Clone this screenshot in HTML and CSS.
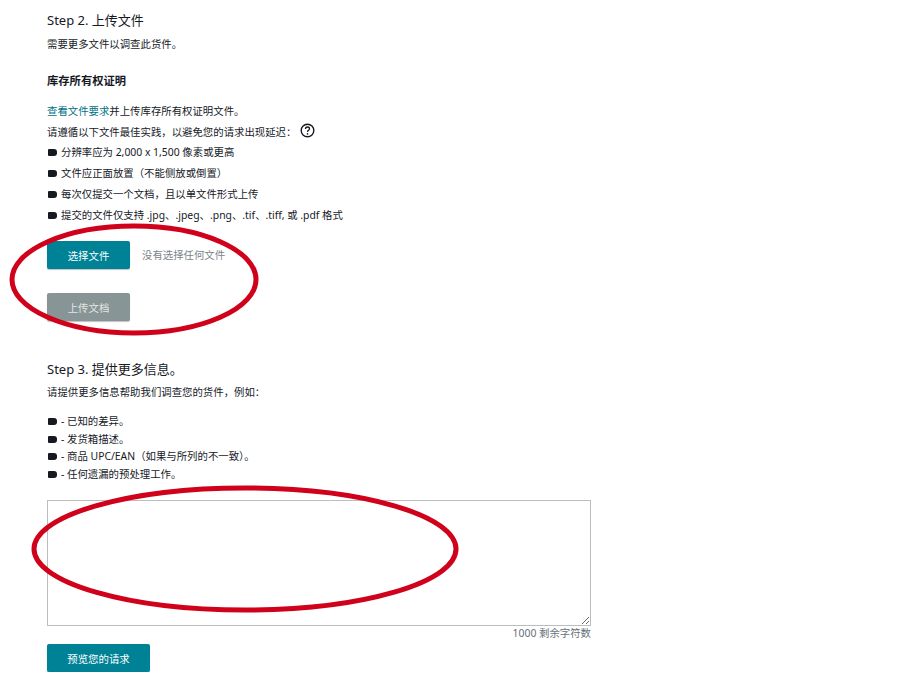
FILE: index.html
```html
<!DOCTYPE html>
<html lang="zh-CN">
<head>
  <meta charset="UTF-8" />
  <title>Step 2</title>
  <link rel="stylesheet" href="styles.css">
</head>
<body>

<div class="page">
  <!-- Step 2 -->
  <h3 class="step-title step-two">Step 2. 上传文件</h3>
  <p class="step-note">需要更多文件以调查此货件。</p>

  <h4 class="doc-title">库存所有权证明</h4>
  <p class="line"><a href="#" class="link">查看文件要求</a>并上传库存所有权证明文件。</p>
  <p class="line">请遵循以下文件最佳实践，以避免您的请求出现延迟：
    <svg class="help" width="15" height="15" viewBox="0 0 15 15">
      <circle cx="7.5" cy="7.5" r="6.3" fill="none" stroke="#16191f" stroke-width="1.4"/>
      <path d="M5.5 6c0-1.3 .9-2 2-2s2 .7 2 1.8c0 1.5-2 1.5-2 3.1" fill="none" stroke="#16191f" stroke-width="1.3"/>
      <circle cx="7.5" cy="10.9" r=".8" fill="#16191f"/>
    </svg>
  </p>
  <ul class="tips">
    <li>分辨率应为 2,000 x 1,500 像素或更高</li>
    <li>文件应正面放置（不能侧放或倒置）</li>
    <li>每次仅提交一个文档，且以单文件形式上传</li>
    <li>提交的文件仅支持 .jpg、.jpeg、.png、.tif、.tiff, 或 .pdf 格式</li>
  </ul>

  <div class="file-row">
    <button class="btn">选择文件</button>
    <span class="file-name">没有选择任何文件</span>
  </div>
  <button class="btn btn-disabled">上传文档</button>

  <!-- Step 3 -->
  <h3 class="step-title step-three">Step 3. 提供更多信息。</h3>
  <p class="step-note">请提供更多信息帮助我们调查您的货件，例如：</p>
  <ul class="tips tips-tight">
    <li>- 已知的差异。</li>
    <li>- 发货箱描述。</li>
    <li>- 商品 UPC/EAN（如果与所列的不一致）。</li>
    <li>- 任何遗漏的预处理工作。</li>
  </ul>

  <textarea class="notes"></textarea>
  <div class="counter">1000 剩余字符数</div>
  <button class="btn btn-wide">预览您的请求</button>
</div>

<!-- red hand-drawn marks on top of the page -->
<svg class="marks" width="914" height="686" viewBox="0 0 914 686">
  <ellipse cx="134" cy="279.5" rx="122" ry="53.5" fill="none" stroke="#d0021b" stroke-width="5"/>
  <ellipse cx="245" cy="549" rx="211" ry="61" fill="none" stroke="#d0021b" stroke-width="5"/>
</svg>

</body>
</html>
```

FILE: styles.css
```css
body {
  margin: 0;
  background: #fff;
  color: #16191f;
  font-family: "Noto Sans", "Noto Sans CJK SC", sans-serif;
  font-size: 10.4px;
  line-height: 16px;
}

.page {
  position: relative;
  width: 544px;
  padding-left: 47px;
}

.step-title {
  margin: 0;
  font-size: 13px;
  font-weight: 400;
  line-height: 18px;
}

.step-two {
  padding-top: 11px;
  margin-bottom: 7px;
}

.step-three {
  margin-top: 39px;
  margin-bottom: 6px;
}

.step-note {
  margin: 0;
}

.doc-title {
  margin: 21px 0 0;
  font-size: 11.3px;
  font-weight: 700;
}

.line {
  margin: 0;
  height: 21px;
  display: flex;
  align-items: center;
}

.doc-title + .line {
  margin-top: 11px;
}

.help {
  margin-left: 4px;
  margin-top: -3px;
}

.link {
  color: #007185;
  text-decoration: none;
}

.tips {
  margin: 0;
  padding: 0;
  list-style: none;
}

.tips li {
  position: relative;
  height: 21px;
  line-height: 21px;
  padding-left: 14px;
}

.tips li::before {
  content: "";
  position: absolute;
  left: 1px;
  top: 7px;
  width: 9px;
  height: 7px;
  background: #16191f;
  border-radius: 1px 3px 3px 1px;
}

.tips-tight {
  margin-top: 13px;
}

.tips-tight li {
  height: 17.5px;
  line-height: 17.5px;
}

.tips-tight li::before {
  top: 5px;
}

.file-row {
  display: flex;
  align-items: center;
  gap: 12px;
  margin-top: 15px;
  margin-bottom: 24px;
}

.btn {
  display: block;
  width: 83px;
  height: 28px;
  padding: 0;
  border: 0;
  border-radius: 2px;
  background: #008296;
  box-shadow: 0 1px 1px rgba(0,0,0,0.25);
  color: #fff;
  font-family: inherit;
  font-size: 10.4px;
}

.btn-disabled {
  background: #879596;
  color: #e6e6e6;
}

.btn-wide {
  width: 103px;
}

.file-name {
  color: #7b8389;
}

.notes {
  display: block;
  box-sizing: border-box;
  width: 544px;
  height: 126px;
  margin: 17px 0 0;
  border: 1px solid #bdbdbd;
  background: #fff;
}

.counter {
  color: #687078;
  text-align: right;
  line-height: 14px;
  height: 14px;
  margin-bottom: 4px;
}

.marks {
  position: absolute;
  left: 0;
  top: 0;
  pointer-events: none;
}
```
